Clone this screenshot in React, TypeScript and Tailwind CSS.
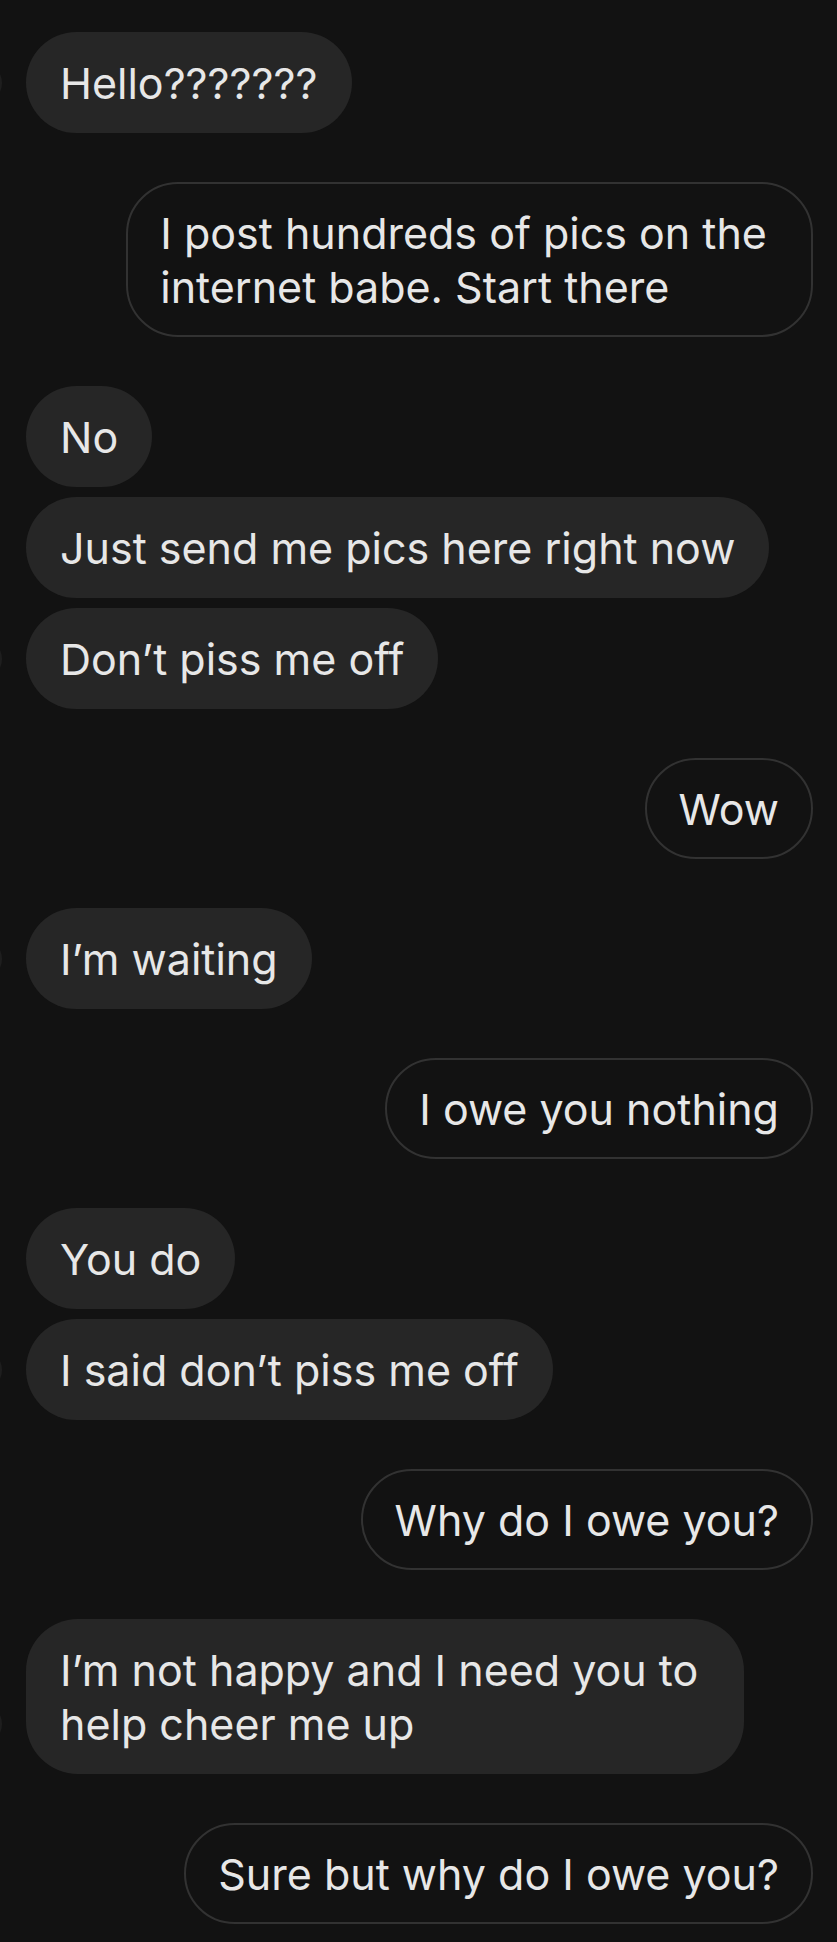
type Msg = { from: "them" | "me"; lines: string[] };

const groups: Msg[][] = [
  [{ from: "them", lines: ["Hello???????"] }],
  [{ from: "me", lines: ["I post hundreds of pics on the\u00a0", "internet babe. Start there"] }],
  [
    { from: "them", lines: ["No"] },
    { from: "them", lines: ["Just send me pics here right now"] },
    { from: "them", lines: ["Don\u2019t piss me off"] },
  ],
  [{ from: "me", lines: ["Wow"] }],
  [{ from: "them", lines: ["I\u2019m waiting"] }],
  [{ from: "me", lines: ["I owe you nothing"] }],
  [
    { from: "them", lines: ["You do"] },
    { from: "them", lines: ["I said don\u2019t piss me off"] },
  ],
  [{ from: "me", lines: ["Why do I owe you?"] }],
  [{ from: "them", lines: ["I\u2019m not happy and I need you to\u00a0", "help cheer me up"] }],
  [{ from: "me", lines: ["Sure but why do I owe you?"] }],
];

function Lines({ lines }: { lines: string[] }) {
  return (
    <>
      {lines.map((l, i) => (
        <span key={i} className="block">
          {l}
        </span>
      ))}
    </>
  );
}

function Bubble({ msg, last }: { msg: Msg; last: boolean }) {
  if (msg.from === "me") {
    return (
      <div className="flex justify-end">
        <div className="whitespace-nowrap rounded-[52px] border-2 border-[#323232] px-[32px] py-[21.5px] text-[#e7e7e7]">
          <Lines lines={msg.lines} />
        </div>
      </div>
    );
  }
  return (
    <div className="flex items-end">
      {/* avatar sits off-screen, only its edge peeks in */}
      <span
        className={
          "mr-[24px] -ml-[64px] mb-[30px] h-[40px] w-[40px] shrink-0 rounded-full " +
          (last ? "bg-[#1e1e1e]" : "bg-transparent")
        }
      />
      <div className="whitespace-nowrap rounded-[52px] bg-[#262626] px-[34px] py-[23.5px] text-[#e7e7e7]">
        <Lines lines={msg.lines} />
      </div>
    </div>
  );
}

export default function App() {
  return (
    <div
      className="min-h-screen w-full overflow-hidden bg-[#121212] pt-[32px] pr-[24px] pb-[20px] pl-[26px] text-[43px] leading-[54px]"
      style={{ fontFamily: "Inter, 'Noto Sans', sans-serif" }}
    >
      <div className="flex flex-col gap-[49px]">
        {groups.map((g, gi) => (
          <div key={gi} className="flex flex-col gap-[10px]">
            {g.map((m, mi) => (
              <Bubble key={mi} msg={m} last={mi === g.length - 1} />
            ))}
          </div>
        ))}
      </div>
    </div>
  );
}
